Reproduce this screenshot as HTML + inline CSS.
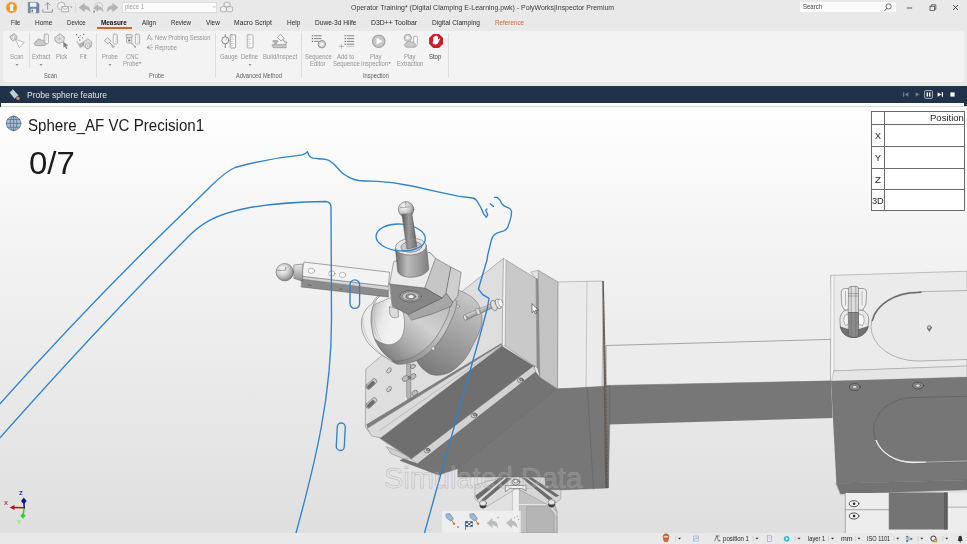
<!DOCTYPE html>
<html><head><meta charset="utf-8"><title>PolyWorks Inspector</title>
<style>
html,body{margin:0;padding:0;}
body{width:967px;height:544px;overflow:hidden;background:#e9e9e9;font-family:"Liberation Sans",sans-serif;position:relative;color:#222;}
.abs{position:absolute;white-space:nowrap;}
.t{position:absolute;white-space:nowrap;transform-origin:0 50%;filter:grayscale(1);}
.t.c{filter:none;}
.rib{position:absolute;left:3px;top:30.5px;width:961px;height:51px;background:#f3f3f3;border-radius:3px;}
.sep{position:absolute;width:1px;background:#dedede;}
.bar{position:absolute;left:0;top:86px;width:967px;height:16.7px;background:#20314a;}
.view{position:absolute;left:0;top:106px;width:967px;height:427px;overflow:hidden;background:linear-gradient(#ffffff 0%,#f3f3f3 33%,#dfdfdf 100%);}
.status{position:absolute;left:0;top:533px;width:967px;height:11px;background:#e9e9e9;}
svg{position:absolute;left:0;top:0;}
</style></head><body>
<div class="t" style="left:351.0px;top:2.74px;font-size:7px;line-height:9.1px;color:#3a3a3a;transform:scaleX(0.991);">Operator Training* (Digital Clamping E-Learning.pwk) - PolyWorks|Inspector Premium</div>
<div class="abs" style="left:122px;top:2px;width:95px;height:11px;background:#fbfbfb;border:1px solid #dcdcdc;box-sizing:border-box;"></div>
<div class="t" style="left:125.0px;top:3.13px;font-size:6.6px;line-height:8.58px;color:#a0a0a0;transform:scaleX(0.893);">piece 1</div>
<div class="abs" style="left:800px;top:2px;width:96px;height:10px;background:#fbfbfb;"></div>
<div class="t" style="left:803.0px;top:2.92px;font-size:6.4px;line-height:8.32px;color:#444;transform:scaleX(0.937);">Search</div>
<div class="t" style="left:10.8px;top:18.34px;font-size:7px;line-height:9.1px;color:#2a2a2a;transform:scaleX(0.820);">File</div>
<div class="t" style="left:34.7px;top:18.34px;font-size:7px;line-height:9.1px;color:#2a2a2a;transform:scaleX(0.932);">Home</div>
<div class="t" style="left:67.2px;top:18.34px;font-size:7px;line-height:9.1px;color:#2a2a2a;transform:scaleX(0.869);">Device</div>
<div class="t" style="left:142.3px;top:18.34px;font-size:7px;line-height:9.1px;color:#2a2a2a;transform:scaleX(0.893);">Align</div>
<div class="t" style="left:171.3px;top:18.34px;font-size:7px;line-height:9.1px;color:#2a2a2a;transform:scaleX(0.871);">Review</div>
<div class="t" style="left:205.8px;top:18.34px;font-size:7px;line-height:9.1px;color:#2a2a2a;transform:scaleX(0.917);">View</div>
<div class="t" style="left:234.1px;top:18.34px;font-size:7px;line-height:9.1px;color:#2a2a2a;transform:scaleX(0.965);">Macro Script</div>
<div class="t" style="left:286.9px;top:18.34px;font-size:7px;line-height:9.1px;color:#2a2a2a;transform:scaleX(0.931);">Help</div>
<div class="t" style="left:314.8px;top:18.34px;font-size:7px;line-height:9.1px;color:#2a2a2a;transform:scaleX(0.942);">Duwe-3d Hilfe</div>
<div class="t" style="left:370.8px;top:18.34px;font-size:7px;line-height:9.1px;color:#2a2a2a;transform:scaleX(0.982);">D3D++ Toolbar</div>
<div class="t" style="left:432.0px;top:18.34px;font-size:7px;line-height:9.1px;color:#2a2a2a;transform:scaleX(0.942);">Digital Clamping</div>
<div class="t" style="left:100.9px;top:18.34px;font-size:7px;line-height:9.1px;color:#111;font-weight:bold;transform:scaleX(0.912);">Measure</div>
<div class="t c" style="left:494.9px;top:18.34px;font-size:7px;line-height:9.1px;color:#c96a35;transform:scaleX(0.901);">Reference</div>
<div class="abs" style="left:97px;top:27.4px;width:35px;height:1.4px;background:#d2642a;"></div>
<div class="rib"></div>
<div class="sep" style="left:29px;top:33px;height:35px"></div>
<div class="sep" style="left:96px;top:33px;height:45px"></div>
<div class="sep" style="left:215px;top:33px;height:45px"></div>
<div class="sep" style="left:301px;top:33px;height:45px"></div>
<div class="sep" style="left:448px;top:33px;height:45px"></div>
<div class="t" style="left:10.2px;top:53.02px;font-size:6.4px;line-height:8.32px;color:#949494;transform:scaleX(0.930);">Scan</div>
<div class="t" style="left:31.7px;top:53.02px;font-size:6.4px;line-height:8.32px;color:#949494;transform:scaleX(0.930);">Extract</div>
<div class="t" style="left:56.4px;top:53.02px;font-size:6.4px;line-height:8.32px;color:#949494;transform:scaleX(0.930);">Pick</div>
<div class="t" style="left:80.2px;top:53.02px;font-size:6.4px;line-height:8.32px;color:#949494;transform:scaleX(0.930);">Fit</div>
<div class="t" style="left:102.1px;top:53.02px;font-size:6.4px;line-height:8.32px;color:#949494;transform:scaleX(0.930);">Probe</div>
<div class="t" style="left:125.6px;top:53.02px;font-size:6.4px;line-height:8.32px;color:#949494;transform:scaleX(0.930);">CNC</div>
<div class="t" style="left:219.6px;top:53.02px;font-size:6.4px;line-height:8.32px;color:#949494;transform:scaleX(0.930);">Gauge</div>
<div class="t" style="left:241.4px;top:53.02px;font-size:6.4px;line-height:8.32px;color:#949494;transform:scaleX(0.930);">Define</div>
<div class="t" style="left:262.5px;top:53.02px;font-size:6.4px;line-height:8.32px;color:#949494;transform:scaleX(0.930);">Build/Inspect</div>
<div class="t" style="left:304.6px;top:53.02px;font-size:6.4px;line-height:8.32px;color:#949494;transform:scaleX(0.930);">Sequence</div>
<div class="t" style="left:337.4px;top:53.02px;font-size:6.4px;line-height:8.32px;color:#949494;transform:scaleX(0.930);">Add to</div>
<div class="t" style="left:370.2px;top:53.02px;font-size:6.4px;line-height:8.32px;color:#949494;transform:scaleX(0.930);">Play</div>
<div class="t" style="left:404.2px;top:53.02px;font-size:6.4px;line-height:8.32px;color:#949494;transform:scaleX(0.930);">Play</div>
<div class="t" style="left:429.4px;top:53.02px;font-size:6.4px;line-height:8.32px;color:#3a3a3a;transform:scaleX(0.930);">Stop</div>
<div class="t" style="left:122.6px;top:59.62px;font-size:6.4px;line-height:8.32px;color:#949494;transform:scaleX(0.930);">Probe</div>
<div class="t" style="left:310.2px;top:59.62px;font-size:6.4px;line-height:8.32px;color:#949494;transform:scaleX(0.930);">Editor</div>
<div class="t" style="left:332.6px;top:59.62px;font-size:6.4px;line-height:8.32px;color:#949494;transform:scaleX(0.930);">Sequence</div>
<div class="t" style="left:360.9px;top:59.62px;font-size:6.4px;line-height:8.32px;color:#949494;transform:scaleX(0.930);">Inspection</div>
<div class="t" style="left:396.8px;top:59.62px;font-size:6.4px;line-height:8.32px;color:#949494;transform:scaleX(0.930);">Extraction</div>
<div class="t" style="left:155.0px;top:33.52px;font-size:6.4px;line-height:8.32px;color:#949494;transform:scaleX(0.907);">New Probing Session</div>
<div class="t" style="left:155.0px;top:44.32px;font-size:6.4px;line-height:8.32px;color:#949494;transform:scaleX(0.896);">Reprobe</div>
<div class="t" style="left:44.0px;top:71.52px;font-size:6.4px;line-height:8.32px;color:#5e5e5e;transform:scaleX(0.890);">Scan</div>
<div class="t" style="left:149.4px;top:71.52px;font-size:6.4px;line-height:8.32px;color:#5e5e5e;transform:scaleX(0.890);">Probe</div>
<div class="t" style="left:235.7px;top:71.52px;font-size:6.4px;line-height:8.32px;color:#5e5e5e;transform:scaleX(0.890);">Advanced Method</div>
<div class="t" style="left:362.8px;top:71.52px;font-size:6.4px;line-height:8.32px;color:#5e5e5e;transform:scaleX(0.890);">Inspection</div>
<svg width="967" height="106" viewBox="0 0 967 106">
<!-- title bar icons -->
<circle cx="11.6" cy="7.5" r="5.7" fill="#ea9524"/><circle cx="11.6" cy="7.5" r="5.2" fill="none" stroke="#f6c98a" stroke-width=".5"/>
<path d="M11.6,3.800 a2.100,2.100 0 0 1 1.200,3.800 l.7,3.500 h-3.800 l.7,-3.500 a2.100,2.100 0 0 1 1.200,-3.800z" fill="#fff"/>
<path d="M28.300,2.300 h9 l1.700,1.700 v8.800 h-10.700z" fill="#6e89ab" stroke="#54708f" stroke-width=".5"/>
<rect x="30" y="2.600" width="6.400" height="4.200" fill="#eef2f6"/><rect x="30.600" y="8.800" width="5.400" height="4" fill="#eef2f6"/><rect x="31.500" y="9.600" width="1.400" height="2.400" fill="#54708f"/>
<g fill="none" stroke="#9a9a9a" stroke-width="1"><path d="M42.800,9 v3.200 h9.600 v-3.200"/><path d="M47.600,9.600 v-6.600 M45.200,5.200 l2.400,-2.600 l2.400,2.600"/></g>
<g fill="#f2f2f2" stroke="#a6a6a6" stroke-width=".8"><circle cx="61.300" cy="6" r="3.800"/><rect x="61.800" y="6.600" width="6.800" height="5.200"/><path d="M61.800,6.800 l3.400,2.800 l3.400,-2.800" fill="none"/></g>
<path d="M70,6.600 h2.600 l-1.300,1.600z" fill="#999"/>
<rect x="75" y="2" width="1" height="11" fill="#dcdcdc"/>
<g fill="#b4b4b4">
<path d="M78.600,7.600 L84.600,2.800 L84.600,5.400 C88.400,5.400 90.200,8 90.200,12.400 C88.600,9.800 87.200,9.400 84.600,9.400 L84.600,12.200 Z"/>
<path d="M93,8.200 L98,4 L98,6.200 C101.400,6.200 103.400,8.600 103.600,12.400 C102,10.200 100.600,9.600 98,9.600 L98,11.800 Z"/>
<path d="M118.400,7.600 L112.400,2.800 L112.400,5.400 C108.600,5.400 106.800,8 106.800,12.400 C108.400,9.800 109.800,9.400 112.400,9.400 L112.400,12.200 Z"/>
</g>
<circle cx="98.600" cy="6.400" r="4" fill="none" stroke="#c0c0c0" stroke-width=".7"/>
<path d="M93.200,10.800 l1.800,1.800 M95,10.800 l-1.800,1.800" stroke="#555" stroke-width=".6"/>
<path d="M212.600,6 l1.600,1.800 l1.600,-1.800" fill="none" stroke="#b8b8b8" stroke-width=".7"/>
<g fill="#ededed" stroke="#9c9c9c" stroke-width=".7"><path d="M224,3.200 l3,-1 l3,1 v3 l-3,1 l-3,-1z"/><path d="M220.600,7.400 l3,-1 l3,1 v3.600 l-3,1 l-3,-1z"/><path d="M226.600,7.400 l3,-1 l3,1 v3.600 l-3,1 l-3,-1z"/></g>
<!-- search + window controls -->
<circle cx="888.600" cy="6.400" r="2.600" fill="none" stroke="#444" stroke-width=".8"/><path d="M886.800,8.400 l-2.400,2.600" stroke="#444" stroke-width=".9"/>
<path d="M906.800,8 h5.400" stroke="#333" stroke-width=".8"/>
<g fill="none" stroke="#333" stroke-width=".7"><rect x="930" y="6.200" width="4.400" height="4.400"/><path d="M931.400,6.200 v-1.400 h4.400 v4.400 h-1.400"/></g>
<path d="M953,5 l5,5 M958,5 l-5,5" stroke="#333" stroke-width=".9"/>
<!-- ribbon icons -->
<g stroke-linejoin="round" stroke-linecap="round">
<!-- scan -->
<rect x="10.600" y="34.600" width="6" height="5.400" rx="1.200" fill="#dcdcdc" stroke="#9a9a9a" stroke-width=".8" transform="rotate(-35 13.600 37.300)"/>
<circle cx="13.600" cy="37.300" r="1.500" fill="#f8f8f8" stroke="#aaa" stroke-width=".5"/>
<path d="M15.600,39.400 L24.200,42.400 L19.600,47.400 Z" fill="#fcfcfc" stroke="#a8a8a8" stroke-width=".8"/>
<!-- extract -->
<rect x="44.200" y="34.200" width="4.200" height="9.400" rx=".8" fill="#fafafa" stroke="#a4a4a4" stroke-width=".8"/>
<path d="M45.200,36 h1.400 M45.200,38 h1.400 M45.200,40 h1.400" stroke="#aaa" stroke-width=".5"/>
<path d="M36.600,45.600 C33.600,45.600 33.400,41.800 36.400,41.600 C36.600,38.600 40.400,38.200 41.600,40.400 C43.200,39.400 45,40.600 44.800,42.200 C46.600,42.600 46.400,45.600 44.400,45.600 Z" fill="#cacaca" stroke="#9c9c9c" stroke-width=".8"/>
<!-- pick -->
<path d="M55,37.400 L59.800,33.800 L64.400,37.200 L63.600,41.800 L59,43.400 L55.600,41.400 Z" fill="#e6e6e6" stroke="#9a9a9a" stroke-width=".8"/>
<path d="M55,37.400 L59.400,38.600 L64.400,37.200 M59.800,33.800 L59.400,38.600 L59,43.400 M59.400,38.600 L55.600,41.400 M59.400,38.600 L63.600,41.800" fill="none" stroke="#aaa" stroke-width=".5"/>
<path d="M63.200,41.800 L68.400,45.600 L66.200,45.800 L67.400,48.400 L66.200,48.900 L65,46.400 L63.600,47.800 Z" fill="#7c7c7c"/>
<!-- fit -->
<g fill="#666"><circle cx="76.600" cy="34.800" r=".7"/><circle cx="80.200" cy="35.600" r=".6"/><circle cx="83.800" cy="34.400" r=".7"/><circle cx="78.600" cy="37.400" r=".6"/><circle cx="82.400" cy="37.800" r=".6"/><circle cx="79.800" cy="40" r=".7"/></g>
<path d="M77,41.600 C78,44.400 80.400,44.400 81.400,43 L83.600,41.600 L83.600,45.200 L80.600,47.600 Z" fill="#b0b0b0" stroke="#999" stroke-width=".5"/>
<path d="M83.800,41.800 L87.600,38.800 L91.800,42 L91.400,46.400 L87.400,49 L84,46.400 Z" fill="#e2e2e2" stroke="#9a9a9a" stroke-width=".7"/>
<path d="M85.700,40.300 L89.700,43.400 M83.800,41.800 L87.800,45 L91.800,42 M87.800,45 L87.400,49" fill="none" stroke="#aaa" stroke-width=".5"/>
<circle cx="87.800" cy="46" r="2.400" fill="#f6f6f6" stroke="#9a9a9a" stroke-width=".7"/><circle cx="87.800" cy="46" r=".8" fill="#aaa"/>
<!-- probe -->
<rect x="113.200" y="34.200" width="4.200" height="9.800" rx=".8" fill="#fafafa" stroke="#a4a4a4" stroke-width=".8"/>
<path d="M115.400,36 h1.400 M115.400,38 h1.400 M115.400,40 h1.400 M115.400,42 h1.400" stroke="#aaa" stroke-width=".5"/>
<path d="M104.400,40.400 L108,37.600 L110.800,41.200 L108.400,43.600 Z" fill="#ececec" stroke="#9a9a9a" stroke-width=".8"/>
<path d="M109.800,42.600 L112.600,46" stroke="#8a8a8a" stroke-width="1"/><circle cx="113" cy="46.600" r="1" fill="#eee" stroke="#888" stroke-width=".6"/>
<!-- cnc probe -->
<rect x="135.400" y="34.200" width="4.200" height="9.800" rx=".8" fill="#fafafa" stroke="#a4a4a4" stroke-width=".8"/>
<path d="M137.600,36 h1.400 M137.600,38 h1.400 M137.600,40 h1.400 M137.600,42 h1.400" stroke="#aaa" stroke-width=".5"/>
<rect x="126.200" y="34.600" width="6" height="3" rx=".6" fill="#e4e4e4" stroke="#9a9a9a" stroke-width=".8"/>
<rect x="126.600" y="37.800" width="5.200" height="5.200" rx=".8" fill="#f2f2f2" stroke="#9a9a9a" stroke-width=".8"/>
<circle cx="129.200" cy="40.400" r="1.200" fill="#777"/>
<path d="M131.200,42.800 L134.600,46.200" stroke="#8a8a8a" stroke-width="1"/><circle cx="135" cy="46.800" r=".9" fill="#888"/>
<!-- small icons -->
<path d="M147,40 L149.200,34.600 L150.600,37.400 L152.600,39.400 M148,38 L151.400,39.800" fill="none" stroke="#a6a6a6" stroke-width=".9"/>
<path d="M146.400,47.600 L149,45.200 L150,49.800 Z" fill="#a6a6a6"/><path d="M150.400,45.600 l1.600,-1 M151,47.400 l1.800,0 M150.600,49 l1.400,1" stroke="#a6a6a6" stroke-width=".7"/>
<!-- gauge -->
<rect x="230.200" y="34.800" width="5.400" height="13.200" rx=".8" fill="#fafafa" stroke="#8e8e8e" stroke-width=".8"/>
<path d="M230.800,37 h2 M230.800,39.200 h2.800 M230.800,41.400 h2 M230.800,43.600 h2.800 M230.800,45.800 h2" stroke="#999" stroke-width=".5"/>
<path d="M225.300,34.600 V36.600 M225.300,44 V47.600" stroke="#777" stroke-width=".9"/>
<circle cx="225.300" cy="40.300" r="3.500" fill="#f8f8f8" stroke="#777" stroke-width=".9"/><path d="M225.300,40.300 L226.800,38.600" stroke="#888" stroke-width=".6"/>
<!-- define -->
<rect x="247.200" y="34.800" width="5.800" height="13.200" rx=".8" fill="#fafafa" stroke="#a0a0a0" stroke-width=".8"/>
<path d="M247.800,37 h2 M247.800,39.200 h2.800 M247.800,41.400 h2 M247.800,43.600 h2.800 M247.800,45.800 h2" stroke="#aaa" stroke-width=".5"/>
<!-- build/inspect -->
<path d="M277.600,37 L280.600,34.200 L284.200,38.400 L281.400,40.800 Z" fill="#f2f2f2" stroke="#8c8c8c" stroke-width=".8"/>
<path d="M283,39.800 L285.400,42" stroke="#8a8a8a" stroke-width="1"/><circle cx="285.800" cy="42.600" r="1" fill="#eee" stroke="#888" stroke-width=".6"/>
<path d="M273.200,40.600 h4.600 v1.400 h-1.400 v2.400 h9.800 v3.400 h-13 v-1.400 h-1 v-2 h2.400 v-2.400 h-1.400z" fill="#b4b4b4" stroke="#8e8e8e" stroke-width=".5"/>
<path d="M273,46.200 h13" stroke="#f4f4f4" stroke-width=".5" stroke-dasharray="1.200 .8"/>
<!-- sequence editor -->
<g stroke="#777" stroke-width=".9"><path d="M314.200,35.800 h7 M314.200,38.600 h7 M314.200,41.400 h4"/></g>
<g fill="#666"><rect x="311.800" y="35.300" width="1.200" height="1.100"/><rect x="311.800" y="38.100" width="1.200" height="1.100"/><rect x="311.800" y="40.900" width="1.200" height="1.100"/></g>
<circle cx="321.800" cy="44.200" r="3.700" fill="#d0d0d0" stroke="#8c8c8c" stroke-width=".9"/><path d="M320.600,42.200 L324.200,44.200 L320.600,46.200 Z" fill="#fff"/>
<!-- add to sequence -->
<g stroke="#777" stroke-width=".9"><path d="M347.200,35.800 h6.600 M347.200,38.600 h6.600 M347.200,41.400 h6.600 M347.200,44.200 h6.600"/></g><path d="M347.200,46.400 h6.600" stroke="#bbb" stroke-width=".8"/>
<g fill="#666"><rect x="344.600" y="35.300" width="1.300" height="1.100"/><rect x="344.600" y="38.100" width="1.300" height="1.100"/><rect x="344.600" y="40.900" width="1.300" height="1.100"/><rect x="344.600" y="43.700" width="1.300" height="1.100"/></g>
<path d="M339.600,46.400 h3.800 M341.500,44.500 v3.800" stroke="#aaa" stroke-width=".8"/>
<!-- play inspection -->
<circle cx="378.700" cy="41.200" r="6.200" fill="#c8c8c8" stroke="#a2a2a2" stroke-width="1.200"/><path d="M376.600,37.800 L382.600,41.200 L376.600,44.600 Z" fill="#fdfdfd"/>
<!-- play extraction -->
<rect x="413.600" y="36.400" width="3.800" height="9.200" rx=".7" fill="#fafafa" stroke="#a4a4a4" stroke-width=".8"/>
<path d="M407,47.200 C404,47.200 403.800,43.600 406.600,43.200 C407,40.600 410.600,40.400 411.800,42.400 C413.400,41.600 415.200,42.600 415,44.200 C416.800,44.600 416.600,47.200 414.600,47.200 Z" fill="#cacaca" stroke="#9c9c9c" stroke-width=".8"/>
<circle cx="407.800" cy="37.800" r="3.600" fill="#d4d4d4" stroke="#a0a0a0" stroke-width=".9"/><path d="M406.600,36 L410,37.800 L406.600,39.600 Z" fill="#fff"/>
<!-- stop -->
<path d="M433.200,33.900 h5.800 l4.100,4.100 v5.800 l-4.100,4.100 h-5.800 l-4.100,-4.100 v-5.800z" fill="#cb1f2e"/>
<path d="M433.200,41.600 v-4 a.6,.6 0 0 1 1.200,0 v-1.200 a.6,.6 0 0 1 1.200,0 v-.4 a.6,.6 0 0 1 1.200,0 v.8 a.6,.6 0 0 1 1.200,0 v3.200 l1,-1.400 a.6,.6 0 0 1 1,.6 l-2,3.800 c-.6,1 -1.400,1.400 -2.400,1.400 h-.6 c-1.400,0 -2.400,-1 -2.400,-2.400z" fill="#fff"/>
</g>
<!-- dropdown arrows -->
<g fill="#8e8e8e">
<path d="M15.5,64 h3 l-1.500,1.900z"/><path d="M39.500,64 h3 l-1.500,1.900z"/><path d="M108.500,64 h3 l-1.500,1.900z"/><path d="M138.800,62.200 h2.800 l-1.400,1.800z"/><path d="M248.500,64 h3 l-1.500,1.900z"/><path d="M388.200,62.200 h2.800 l-1.400,1.800z"/>
</g>
</svg>
<div class="bar"></div>
<div class="abs" style="left:0;top:102.7px;width:967px;height:3.6px;background:#fdfdfd;"></div>
<div class="abs" style="left:0;top:106.2px;width:967px;height:1.1px;background:#dadada;z-index:3"></div>
<div class="abs" style="left:0;top:102.7px;width:1.3px;height:4.3px;background:#20314a;z-index:4"></div>
<div class="abs" style="left:963.5px;top:102.7px;width:3.5px;height:3.6px;background:#20314a;z-index:4"></div>
<div class="t" style="left:26.8px;top:89.08px;font-size:9.4px;line-height:12.22px;color:#e4e6ea;transform:scaleX(0.909);">Probe sphere feature</div>
<svg width="967" height="106" viewBox="0 0 967 106">
<g>
<path d="M9.8,92.4 L12.8,89.6 L18.4,95.2 L14.4,98.6 Z" fill="#b9c3cf" stroke="#8fa0b2" stroke-width=".4"/>
<path d="M11.4,91 L16,97.2 M12.8,89.6 L17.4,96.2 M10.6,92 L15,98" stroke="#e4e9ee" stroke-width=".5" fill="none"/>
<circle cx="18" cy="98.4" r="1.7" fill="#d8874a"/>
<g fill="#6f7c8e"><path d="M903,92.200 h1.200 v4.600 h-1.200z M908.400,92.200 v4.600 l-3.800,-2.300z"/><path d="M915.600,92.200 l4,2.300 l-4,2.300z"/></g>
<rect x="924.600" y="90.600" width="7.800" height="7.800" rx="1" fill="none" stroke="#dfe3e8" stroke-width=".7"/>
<g fill="#fff"><rect x="926.600" y="92.400" width="1.400" height="4.200"/><rect x="929" y="92.400" width="1.400" height="4.200"/>
<path d="M937.600,92.200 l3.800,2.300 l-3.800,2.300z M941.800,92.200 h1.200 v4.600 h-1.200z"/>
<rect x="950.400" y="92.400" width="4.200" height="4.200"/></g>
</g>
</svg>
<div class="view">
<svg width="967" height="427" viewBox="0 106 967 427">
<defs>
<linearGradient id="gsph" x1="0" y1="0" x2="1" y2="1"><stop offset="0" stop-color="#f4f4f4"/><stop offset="1" stop-color="#9a9a9a"/></linearGradient>
<linearGradient id="gcyl" x1="0" y1="0" x2="1" y2="0"><stop offset="0" stop-color="#b8b8b8"/><stop offset=".35" stop-color="#e6e6e6"/><stop offset="1" stop-color="#8c8c8c"/></linearGradient>
<linearGradient id="gbig" x1="0" y1="0" x2="1" y2="1"><stop offset="0" stop-color="#a8a8a8"/><stop offset=".4" stop-color="#d8d8d8"/><stop offset="1" stop-color="#9c9c9c"/></linearGradient>
<linearGradient id="gbody" gradientUnits="userSpaceOnUse" x1="392" y1="362" x2="440" y2="305"><stop offset="0" stop-color="#7e7e7e"/><stop offset=".3" stop-color="#aaaaaa"/><stop offset=".65" stop-color="#d0d0d0"/><stop offset="1" stop-color="#c0c0c0"/></linearGradient>
<linearGradient id="gbody2" gradientUnits="userSpaceOnUse" x1="398" y1="365" x2="450" y2="305"><stop offset="0" stop-color="#7e7e7e"/><stop offset=".35" stop-color="#a4a4a4"/><stop offset=".7" stop-color="#c8c8c8"/><stop offset="1" stop-color="#bcbcbc"/></linearGradient>
<linearGradient id="gback" gradientUnits="userSpaceOnUse" x1="430" y1="376" x2="476" y2="300"><stop offset="0" stop-color="#787878"/><stop offset=".35" stop-color="#939393"/><stop offset=".7" stop-color="#aeaeae"/><stop offset="1" stop-color="#c6c6c6"/></linearGradient>
<linearGradient id="gbore" gradientUnits="userSpaceOnUse" x1="371" y1="320" x2="392" y2="326"><stop offset="0" stop-color="#c9c9c9"/><stop offset=".5" stop-color="#e9e9e9"/><stop offset="1" stop-color="#f1f1f1"/></linearGradient>
<linearGradient id="gscrew" gradientUnits="userSpaceOnUse" x1="478" y1="308" x2="481" y2="315"><stop offset="0" stop-color="#eee"/><stop offset="1" stop-color="#777"/></linearGradient>
</defs>
<g stroke-linejoin="round" stroke-linecap="round">
<!-- ===== beam ===== -->
<polygon points="606.5,345.5 831,339.4 831,381 606.5,385.5" fill="#ececec" stroke="#868686" stroke-width=".7"/>
<polygon points="606.5,385.5 831,380.8 832.6,417.9 608,424.5" fill="#777"/>
<!-- ===== right block ===== -->
<polygon points="831.2,275.4 967,271.2 967,366 834,371" fill="#ebebeb" stroke="#8a8a8a" stroke-width=".5"/>
<polygon points="831.2,275.4 834,275.3 834,381 831,381.6" fill="#f6f6f6" stroke="#999" stroke-width=".4"/>
<polygon points="834,371 967,366 967,377 832,381.3" fill="#e6e6e6" stroke="#8a8a8a" stroke-width=".4"/>
<polygon points="831,381 967,377 967,479.9 836.4,483.5" fill="#777"/>
<polygon points="836.4,483.5 967,479.9 967,489.8 840.6,494.1" fill="#737373" stroke="#666" stroke-width=".4"/>
<!-- slot top -->
<path d="M967,290.5 L918,291.8 A47,34.6 0 0 0 918,361 L967,359.5" fill="#e9e9e9" stroke="#8a8a8a" stroke-width=".6"/>
<path d="M921,292.3 L918,292.4 A46.4,34 0 0 0 872.4,320.4" fill="none" stroke="#6a6a6a" stroke-width="1.5"/>
<!-- slot bottom -->
<path d="M967,396.3 L913,397.5 A39.4,32.85 0 0 0 913,463.2 L967,461.6" fill="#767676" stroke="#5a5a5a" stroke-width=".6"/>
<path d="M875.2,440 A39.4,32.85 0 0 0 913,463.2 L926,462.8 L926,461.6 L913,461.4 A36.5,29.5 0 0 1 876.8,440 Z" fill="#ededed"/>
<path d="M926,462.2 L967,461" stroke="#cfcfcf" stroke-width=".7" fill="none"/>
<!-- bolts -->
<g fill="#8a8a8a" stroke="#333" stroke-width=".6"><ellipse cx="854.8" cy="387" rx="5.5" ry="3.4"/><ellipse cx="918" cy="385.6" rx="5.5" ry="3.4"/></g>
<g fill="#ddd" stroke="#444" stroke-width=".5"><ellipse cx="854.8" cy="387" rx="2.4" ry="1.6"/><ellipse cx="918" cy="385.6" rx="2.4" ry="1.6"/></g>
<!-- pin -->
<circle cx="929.3" cy="327.6" r="2" fill="#ccc" stroke="#444" stroke-width=".6"/><path d="M927.6,328.6 L929.3,331.5 L931,328.6" fill="#777" stroke="#444" stroke-width=".4"/>
<!-- lower right boxes -->
<rect x="845.3" y="493" width="122" height="40.5" fill="#ededed"/>
<path d="M845.3,494 V533 M845.3,509.7 H889 M948,507.1 H967" stroke="#8e8e8e" stroke-width=".7" fill="none"/>
<rect x="888.8" y="492.5" width="58.8" height="37" fill="#747474"/>
<rect x="944" y="492.5" width="3.6" height="37" fill="#5e5e5e"/>
<g fill="#f6f6f6" stroke="#2e2e2e" stroke-width=".8"><ellipse cx="854.1" cy="503.7" rx="4.8" ry="3"/><ellipse cx="854.1" cy="516" rx="4.8" ry="3"/></g>
<circle cx="854.1" cy="503.7" r="1.3" fill="#222"/><circle cx="854.1" cy="516" r="1.3" fill="#222"/>
<!-- ===== central block ===== -->
<polygon points="558,282 603.3,281 602,388 557.5,388.8" fill="#ebebeb" stroke="#8a8a8a" stroke-width=".5"/>
<path d="M587,281.7 L586,388" stroke="#9a9a9a" stroke-width=".5"/>
<!-- plate 2 -->
<polygon points="538.3,270.3 558,282 557.5,388.8 540,377.8" fill="#c3c3c3" stroke="#777" stroke-width=".5"/>
<polygon points="531,272 538.3,270.3 538.3,279 536,278.5" fill="#e2e2e2" stroke="#777" stroke-width=".4"/>
<!-- box right face -->
<polygon points="506,260 536,278.5 537,367.5 505,346" fill="#c9c9c9" stroke="#777" stroke-width=".5"/>
<polygon points="536,278.5 538.3,279 540,377.8 537,367.5" fill="#8a8a8a"/>
<!-- box big face -->
<polygon points="503.6,258.6 502.5,345.8 381,438 369,431.6 365.3,427 365.8,369.2 379.3,357.6" fill="#dedede" stroke="#777" stroke-width=".5"/>
<polygon points="503.6,258.6 506,260 505,346 502.5,345.8" fill="#f2f2f2" stroke="#888" stroke-width=".4"/>
<!-- dark band 1 -->
<polygon points="380.5,438.5 501.6,346 535,367 411.6,458.8" fill="#6f6f6f" stroke="#555" stroke-width=".4"/>
<!-- light strip -->
<polygon points="411.6,458.8 533.8,365.7 535.8,372 417.6,463.8" fill="#d2d2d2" stroke="#666" stroke-width=".4"/>
<!-- dark 2 -->
<polygon points="417.6,463.8 535.8,372 540,377.8 557,388.9 458,468.6 438.6,475 400,460.5 403.5,458.8" fill="#747474" stroke="#555" stroke-width=".4"/>
<!-- big dark -->
<polygon points="458,468.6 557,388.9 609.7,386 609.7,423.6 608.4,488 545,490.6 544,477 458,477" fill="#777" stroke="#5a5a5a" stroke-width=".4"/>
<path d="M587.3,388 L593.5,489" stroke="#5c5c5c" stroke-width=".5"/>
<!-- dark vertical strip -->
<polygon points="602.3,281 603.8,281 608.6,488 605.2,488" fill="#5c5c5c"/>
<path d="M603.4,300 L608,487" stroke="#b0764a" stroke-width=".6" stroke-dasharray="1.500 2.500" fill="none"/>

<!-- ===== column below ===== -->
<g stroke-linejoin="round">
<polygon points="519.4,486 548,486 557.2,512 557.2,533 519.4,533" fill="#c2c2c2" stroke="#777" stroke-width=".5"/>
<polygon points="512.8,489 519.4,489 519.4,533 512.8,533" fill="#efefef" stroke="#999" stroke-width=".4"/>
<path d="M519.4,504.6 L548.500,504.600 L557.200,515" fill="none" stroke="#f2f2f2" stroke-width=".8"/>
<polygon points="527,506.2 548,506.2 554,513.5 554,533 527,533" fill="#b5b5b5" stroke="#8a8a8a" stroke-width=".4"/>
<!-- left bracket -->
<polygon points="475.2,485 500.8,477.4 514,477.4 514,490 486,507 475.2,499.5" fill="#dcdcdc" stroke="#777" stroke-width=".4"/>
<polygon points="499.6,477.4 504.4,477.4 477.5,499.9 475.2,495.7" fill="#6c6c6c"/>
<polygon points="506.8,477.4 511.5,478.500 485.3,500.500 480.5,500.5" fill="#6c6c6c"/>
<!-- right bracket -->
<polygon points="520,477.4 545,477.4 545,489.7 560.8,489.7 560.8,499 551,506.500 520,490" fill="#d6d6d6" stroke="#777" stroke-width=".4"/>
<polygon points="521.2,477.4 525.3,477.4 552.8,498.7 548.6,499.9" fill="#6c6c6c"/>
<polygon points="527.1,477.4 531.9,477.4 559.4,495.7 555.8,496.9" fill="#6c6c6c"/>
<g stroke="#444" stroke-width=".5">
<ellipse cx="483" cy="505.6" rx="3.2" ry="2.6" fill="#3c3c3c"/><ellipse cx="483" cy="503.2" rx="3.5" ry="2.6" fill="#e6e6e6"/>
<ellipse cx="551.6" cy="504.6" rx="3.2" ry="2.6" fill="#3c3c3c"/><ellipse cx="551.6" cy="502.2" rx="3.5" ry="2.6" fill="#e6e6e6"/>
<ellipse cx="515.8" cy="482" rx="4" ry="3" fill="#d8d8d8"/><ellipse cx="515.8" cy="481.200" rx="2.4" ry="1.600" fill="#f4f4f4"/>
<polygon points="505.6,485.5 526,485.5 526,491 522,488.600 509.500,488.600 505.6,491.500" fill="#f2f2f2"/>
</g>
</g>
<!-- ===== large cylinder ===== -->
<g stroke-linejoin="round" stroke-linecap="round">
<!-- E back flange -->
<path d="M417.5,362.2 C420,366 422,368.5 424.8,370.4 C428,373.5 431,374.6 434,375 C438,375.6 441.5,375.2 445,374.1 C448.5,373 451.5,371.5 454.2,369.5 C458.5,366.3 462,362.6 465.2,358.5 C468.2,354.5 470.6,350 472.6,345.6 C475,341 477.3,337 479,332.8 C480.6,329 481.4,325.3 481.8,321.7 C482.2,317.8 481.8,314 480.9,310.7 C480,307 478.4,304.2 476.3,301.5 C474,298.5 470.8,296 467.1,294.2 C464.7,292.6 462.2,291.4 459.7,290.5 L430,290 L405,330 Z" fill="url(#gback)" stroke="#5e5e5e" stroke-width=".5"/>
<!-- D chamfer band -->
<path d="M392,361.5 L396.3,364 C400.3,364.5 404.3,364.2 408.3,363.1 C411.5,362.5 414.5,361.6 417.5,360.3 C421.5,358.3 425,355.8 428.5,353 C431,350.8 433.5,348.3 435.8,345.6 C438.5,342.5 441,339 443.2,335.5 C446,331 448.5,326.5 450.5,321.7 C452.3,318 453.8,314.4 455.1,310.7 C456,307.6 456.6,304.6 457,301.5 L440,285 L400,320 Z" fill="url(#gbody2)" stroke="#5e5e5e" stroke-width=".5"/>
<!-- C side wall -->
<path d="M372,318 L374.3,338.3 L379.8,348.4 L386.2,355.7 L394.5,361.2 C398,361.5 401.3,361 404.6,360 C408.5,359 412,357.6 415.6,355.7 C419,353.8 422,351.7 424.8,349.3 C427.4,347 430,344.6 432.2,342 C435,338.8 437.4,335.4 439.5,331.8 C441.6,328.5 443.5,325.2 445,321.7 C446.5,318.7 447.7,315.7 448.7,312.6 C449.6,309.6 450.1,306.5 450.5,303.4 L430,280 L380,320 Z" fill="url(#gbody)" stroke="#5e5e5e" stroke-width=".5"/>
<!-- B bore interior -->
<path d="M373.4,305.2 C371.8,309 371.2,312.6 371.2,316.2 C370.9,319.4 371,322.4 371.5,325.4 C371.9,329.8 372.8,334 374.3,338.3 C378,341.5 382.5,343.8 387.2,344.7 C389.8,344.8 392.2,344.4 394.5,343.4 C397,342.2 399.2,340.5 400.9,338.3 C402.4,336 403.3,333.6 403.7,330.9 C404.4,327.9 404.7,324.8 404.6,321.7 C404.5,318.6 404,315.6 403.1,312.6 L398,295 Z" fill="url(#gbore)" stroke="#666" stroke-width=".5"/>
<path d="M374.6,300 C370,312 372,330 378.5,339.5" fill="none" stroke="#999" stroke-width=".4"/>
<path d="M376.6,299 C372.4,312 374,328 381,340.6" fill="none" stroke="#aaa" stroke-width=".4"/>
<!-- A crescent -->
<path d="M378,296 C375,298 374,300.5 372.5,303.4 C368.5,306 365.8,309 364.2,312.6 C362.2,316 361.3,319.8 361.4,323.6 C361.3,328 362.3,332.3 364.2,336.4 C366.3,341 369.4,345 373.4,348.4 C376.2,351.2 379.2,353.6 382.6,355.7 C386.3,358 390.2,360 394.5,361.2 C391.5,359.8 388.7,358 386.2,355.7 C383.8,353.6 381.6,351.2 379.8,348.4 C377.5,345.3 375.6,342 374.3,338.3 C372.8,334 371.9,329.8 371.5,325.4 C371,322.4 370.9,319.4 371.2,316.2 C371.2,312.6 371.8,309 373.4,305.2 C374.6,301.5 376.8,298.4 380,296 Z" fill="#ededed" stroke="#5e5e5e" stroke-width=".5"/>
<path d="M363,318 C362,332 368,346 392,361.8" fill="none" stroke="#8a8a8a" stroke-width=".4"/>
<!-- small pins on cylinder -->
<circle cx="433.3" cy="348.5" r="1.7" fill="#e8e8e8" stroke="#555" stroke-width=".4"/>
<circle cx="458" cy="306.5" r="1.5" fill="#e0e0e0" stroke="#555" stroke-width=".4"/>
<!-- screw on right -->
<polygon points="464.5,315 492,303.5 493.5,307.5 466,320" fill="url(#gscrew)" stroke="#555" stroke-width=".4"/>
<ellipse cx="465.2" cy="317.5" rx="1.6" ry="2.7" fill="#e0e0e0" stroke="#555" stroke-width=".4" transform="rotate(-20 465.2 317.5)"/>
<ellipse cx="478" cy="311.5" rx="2" ry="3.6" fill="#d8d8d8" stroke="#555" stroke-width=".4" transform="rotate(-20 478 311.5)"/>
<ellipse cx="494" cy="305.5" rx="3" ry="5.4" fill="#dcdcdc" stroke="#444" stroke-width=".5" transform="rotate(-20 494 305.5)"/>
<ellipse cx="498.5" cy="303.8" rx="2.8" ry="5" fill="#eee" stroke="#444" stroke-width=".5" transform="rotate(-20 498.5 303.8)"/>
<ellipse cx="500.5" cy="303" rx="2.2" ry="4" fill="#f4f4f4" stroke="#555" stroke-width=".4" transform="rotate(-20 500.5 303)"/>
</g>
<!-- ===== plate details ===== -->
<g stroke="#555" stroke-width=".5" stroke-linecap="round">
<rect x="407" y="364" width="3.8" height="35" fill="#b4b4b4" stroke="#666" stroke-width=".5"/>
<g transform="rotate(-43 371.3 384)"><rect x="364.8" y="381.4" width="13" height="5.2" rx="2.6" fill="#c9c9c9"/><rect x="365.600" y="382.600" width="9.500" height="3.600" rx="1.800" fill="#6c6c6c" stroke="none"/></g>
<g transform="rotate(-43 371.3 403)"><rect x="364.8" y="400.4" width="13" height="5.2" rx="2.6" fill="#c9c9c9"/><rect x="365.600" y="401.600" width="9.500" height="3.600" rx="1.800" fill="#6c6c6c" stroke="none"/></g>
<ellipse cx="389" cy="370.4" rx="1.9" ry="3" fill="#cfcfcf" transform="rotate(35 389 370.4)"/>
<ellipse cx="389" cy="389.1" rx="1.9" ry="3" fill="#cfcfcf" transform="rotate(35 389 389.1)"/>
<g fill="#bdbdbd"><ellipse cx="405.500" cy="378.500" rx="3.6" ry="2.6" transform="rotate(-30 405.500 378.500)"/><ellipse cx="413" cy="376.500" rx="3.4" ry="2.4" transform="rotate(-40 413 376.500)"/>
<ellipse cx="413" cy="366.500" rx="2.6" ry="2" transform="rotate(-30 413 366.500)"/><ellipse cx="414.700" cy="393" rx="3.2" ry="2.4" transform="rotate(-40 414.700 393)"/></g>
<circle cx="409.400" cy="377.600" r="1.500" fill="#8a8a8a"/>
<circle cx="405.7" cy="398.5" r="1.1" fill="#fff" stroke="none"/><circle cx="411.800" cy="399.500" r="1" fill="#fff" stroke="none"/>
</g>
<!-- plate bottom groove + chamfer -->
<polygon points="366.2,424.5 501.6,343 501.6,344.6 367.6,428.2" fill="#7e7e7e" stroke="none"/>
<polygon points="367.6,428.2 501.6,344.6 501.6,346.2 380.7,437.8 372,436" fill="#dadada" stroke="#666" stroke-width=".4"/>
<path d="M379.5,430.500 L501.600,345.600" stroke="#8a8a8a" stroke-width=".4" fill="none"/>
<!-- bolts on light strip -->
<g stroke="#444" stroke-width=".5" fill="#cfcfcf">
<ellipse cx="427" cy="450.6" rx="3" ry="2.4"/><ellipse cx="474" cy="415.4" rx="3" ry="2.4"/><ellipse cx="520.4" cy="380.4" rx="3" ry="2.4"/>
<ellipse cx="428" cy="449.8" rx="1.8" ry="1.4" fill="#9a9a9a"/><ellipse cx="475" cy="414.6" rx="1.8" ry="1.4" fill="#9a9a9a"/><ellipse cx="521.4" cy="379.6" rx="1.8" ry="1.4" fill="#9a9a9a"/>
</g>
<!-- small bracket lower-left -->
<polygon points="386.6,447 391,453.7 403.5,458.8 411.6,458.8 400,452" fill="#cfcfcf" stroke="#666" stroke-width=".4"/>
<!-- ===== probe assembly ===== -->
<defs>
<radialGradient id="gball" cx=".38" cy=".35" r=".75"><stop offset="0" stop-color="#fbfbfb"/><stop offset=".45" stop-color="#d0d0d0"/><stop offset="1" stop-color="#747474"/></radialGradient>
<linearGradient id="gstem" x1="0" y1="0" x2="1" y2="0"><stop offset="0" stop-color="#5c5c5c"/><stop offset=".5" stop-color="#9c9c9c"/><stop offset="1" stop-color="#6c6c6c"/></linearGradient>
<linearGradient id="gscyl" x1="0" y1="0" x2="1" y2="0"><stop offset="0" stop-color="#6a6a6a"/><stop offset=".35" stop-color="#bcbcbc"/><stop offset=".65" stop-color="#a2a2a2"/><stop offset="1" stop-color="#7e7e7e"/></linearGradient>
<linearGradient id="gneck" x1="0" y1="0" x2="0" y2="1"><stop offset="0" stop-color="#ececec"/><stop offset="1" stop-color="#8c8c8c"/></linearGradient>
</defs>
<g stroke-linejoin="round" stroke-linecap="round" stroke="#555" stroke-width=".5">
<!-- rod -->
<polygon points="301.6,278 388.3,289.500 388.3,297 301.6,287" fill="#8b8b8b"/>
<polygon points="301.6,276.2 388.3,286.3 388.3,290.3 301.6,278.9" fill="#d6d6d6" stroke-width=".3"/>
<polygon points="304.3,262.1 389.6,272.2 388.3,286.3 301.6,276.2" fill="#f3f3f3"/>
<polygon points="294.2,265 302.6,264 302.6,281 294.2,278.6" fill="url(#gneck)"/>
<circle cx="284.8" cy="272.2" r="8.7" fill="url(#gball)"/>
<path d="M278,270.500 L285.600,270.200 L285.800,267.500" stroke="#666" stroke-width=".6" fill="none"/>
<g fill="#fcfcfc" stroke="#777"><ellipse cx="311.4" cy="270.8" rx="3.2" ry="2.6"/><ellipse cx="331.8" cy="273.5" rx="3.2" ry="2.6"/><ellipse cx="342.6" cy="274.9" rx="3.2" ry="2.6"/></g>
<g fill="#777" stroke="#aaa" stroke-width=".4"><ellipse cx="309.7" cy="285.2" rx="2.8" ry="1.6" transform="rotate(8 309.7 285.2)"/><ellipse cx="341.2" cy="289.2" rx="2.8" ry="1.6" transform="rotate(8 341.2 289.2)"/></g>
<!-- block bottom faces -->
<polygon points="408.1,314.5 442.1,298 446.2,293 452.8,302 451.2,306.2 433,313.7 412,320" fill="#a6a6a6"/>
<!-- block right faces -->
<polygon points="429.7,252.400 435.5,258.2 451.2,267.3 446.2,293 442.1,298 424.7,288" fill="#c6c6c6"/>
<polygon points="451.2,267.3 461.1,272.3 457.8,296.3 452.8,302 446.2,293" fill="#cfcfcf"/>
<!-- block front face -->
<polygon points="389.9,283.9 424.7,288 442.1,298 408.1,314.5 392.4,306.2" fill="#868686"/>
<!-- block top face -->
<polygon points="394.1,261.5 429.7,252.4 435.5,258.2 424.7,288 389.9,283.9" fill="#eaeaea"/>
<!-- hole -->
<ellipse cx="410.6" cy="296.3" rx="10.8" ry="5.8" fill="#9a9a9a" stroke="#444"/>
<ellipse cx="410.6" cy="296.3" rx="8.4" ry="4.4" fill="#c4c4c4" stroke="#555"/>
<ellipse cx="410.8" cy="296.6" rx="5" ry="2.8" fill="#8e8e8e" stroke="#555"/>
<ellipse cx="411" cy="296.6" rx="2.6" ry="1.5" fill="#f4f4f4" stroke="none"/>
<!-- small foot under block -->
<path d="M389.5,307 L389.8,314 C391,318 396,319 398.5,316.5 L398,309.5 Z" fill="#dcdcdc"/>
<!-- small cylinder -->
<path d="M395.4,248.5 L397.7,271.5 C401,280 424,279 428.8,269 L426.4,246.4 Z" fill="url(#gscyl)"/>
<ellipse cx="410.9" cy="246.6" rx="15.5" ry="8.4" fill="#e6e6e6" transform="rotate(-4 410.9 246.6)"/>
<ellipse cx="411.4" cy="246.8" rx="10.5" ry="5.4" fill="#c9c9c9" transform="rotate(-4 411.4 246.8)"/>
<!-- stem -->
<polygon points="402.2,214 411.6,213 416.9,246.8 407.3,249" fill="url(#gstem)"/>
<circle cx="406.1" cy="209.4" r="7.8" fill="url(#gball)"/>
<path d="M400.5,207.5 L409,207" stroke="#777" stroke-width=".6" fill="none"/><path d="M405.6,202 L405.9,207.2" stroke="#888" stroke-width=".5" fill="none"/>
</g>
<!-- ===== clamp on right block ===== -->
<g stroke="#4a4a4a" stroke-width=".5" stroke-linejoin="round">
<path d="M840,322 C839,314 844,310 848.6,308.8 L858.5,308.8 C864,310 870,314 868.6,322 L868,328 C866,334 860,337.5 854,337.5 C847,337.5 842,334 840.5,328 Z" fill="#e8e8e8"/>
<path d="M844.500,316 C843.500,319 843.500,323 845.500,325.500 L848.600,324 L848.600,314 Z M863.500,316 C864.500,319 864.500,323 862.500,325.500 L858.500,324 L858.500,314 Z" fill="#f8f8f8" stroke-width=".4"/>
<path d="M840.5,327 L848.600,329.5 L858.5,329.5 L868.300,326.5 C866,334 860,337.5 854,337.5 C847,337.5 842,334 840.5,327 Z" fill="#727272"/>
<path d="M841.2,293 C841.2,289.5 843,288.5 846,288.5 L862,288.5 C865.5,288.5 866.5,290 866.5,293 L866,304 C865,307 863,308.8 862.8,310 L844.3,310 C844,308 842,307 841.6,304 Z" fill="#efefef"/>
<path d="M845.500,291.500 L845.500,305 M862,291.500 L862,305" fill="none" stroke="#777" stroke-width=".5"/>
<path d="M848.6,288 C848.600,285.600 858.500,285.600 858.5,288 L858.5,312.5 L848.6,312.5 Z" fill="#dcdcdc"/>
<path d="M848.6,312.5 L858.5,312.5 L858.5,335 L856.500,337.300 L850.600,337.300 L848.6,335 Z" fill="#8a8a8a"/>
<path d="M851.200,286.500 L851.200,337 M855.800,286.500 L855.800,337 M848.600,293.500 H858.500 M848.600,296 H858.500" fill="none" stroke="#666" stroke-width=".45"/>
</g>
<!-- ===== blue scan curves ===== -->
<g fill="none" stroke="#2f82cb" stroke-width="1.35" stroke-linecap="round" stroke-linejoin="round">
<path d="M-2,406 Q72,323 150,245.5 L208,189 C216,181 224,172.5 235,167.5 C258,161 282,157 302.3,154.9 L305.6,153.4 L307.3,151.6 L308.3,153.6 C308.7,155.6 310.5,157.5 313.1,158.2 C316.5,158.8 319.5,158.6 323,159 C325,159.3 327,159.6 328.8,160.3 C330.8,161.3 332.4,162.6 333.8,164 L342,172.7 C344.5,174.8 347.3,176.4 350.3,177.8 C353,179.2 355.8,180 358.7,180.5 C365,181.1 371,181.1 377.3,181.3 L392.2,182.6 L412,186 L436.9,191.6 L458,196.2 L472.9,198 C474.500,198.500 475.800,199.400 476.700,200.600 L480.600,207 L483.800,214.100 L486.400,217.300 L487.700,214.700 L485.700,210.200 L487,209"/>
<path d="M490.200,203.800 L493.500,206.400"/>
<path d="M494.500,197.400 L497.300,197.400 L499.900,200 L501.800,203.800 C502.800,205 503.800,205.900 505,206.400 L509.500,208.300 C510.600,209.200 511.300,210.300 511.500,211.500 C511.600,214.500 511,217.300 510.200,219.900 L507.600,227.600 C506.600,229.200 505.400,230.200 503.800,230.800 L497.300,232.800 C495.300,233.700 493.800,235 492.800,236.600 C492,238.300 491.300,240 490.900,241.800 L489,250 C488,253.500 487.300,257 487,260 L478.400,289 L482.700,294.700 L489,298.400 L487.600,307 C478,345 450,440 424.500,533"/>
<path d="M-2,440 Q100,325 185,240 C200,224 215,214 250,207.5 C270,204 290,202 326,201.5 C330,202 331,204 331,207 L331.500,320 C331.500,395 316,460 296,533"/>
<ellipse cx="400.700" cy="237.500" rx="24.700" ry="13.400" transform="rotate(4 400.700 237.500)"/>
<rect x="350" y="279.800" width="9.600" height="28.600" rx="4.800"/>
<rect x="336.800" y="423" width="8" height="27.500" rx="4" transform="rotate(3 340.800 436.500)"/>
</g>
<polygon points="402.2,214 411.6,213 415.5,238 405.8,239" fill="url(#gstem)"/><path d="M402.2,214 L405.8,239 M411.6,213 L415.5,238" stroke="#555" stroke-width=".4" fill="none"/>
<!-- ===== watermark ===== -->
<text x="384" y="487.600" font-family="Liberation Sans, sans-serif" font-size="29" textLength="198" lengthAdjust="spacingAndGlyphs" fill="rgba(255,255,255,0.12)" stroke="rgba(165,165,165,0.55)" stroke-width=".75">Simulated Data</text>
<!-- ===== toolbar overlay ===== -->
<rect x="442" y="510.800" width="78.700" height="22" fill="rgba(240,240,240,0.86)"/>
<g>
<path d="M446,514 L450,513.500 L453.500,519 L450.500,521 L446.500,518 Z" fill="#9fb7d0" stroke="#5b7ea6" stroke-width=".5"/><path d="M451.500,520 L453.500,523" stroke="#777" stroke-width=".8"/><circle cx="454" cy="523.800" r="1.300" fill="#d9813b"/><circle cx="458" cy="527" r=".8" fill="#34507a"/>
<path d="M470,514 L474,513.500 L477.500,519 L474.500,521 L470.500,518 Z" fill="#9fb7d0" stroke="#5b7ea6" stroke-width=".5"/><path d="M475.500,520 L477.500,523" stroke="#777" stroke-width=".8"/><circle cx="478" cy="523.800" r="1.300" fill="#d9813b"/>
<path d="M465.500,521.500 V529.500" stroke="#34507a" stroke-width=".7"/><rect x="466" y="521.600" width="6.500" height="5" fill="#fff" stroke="#34507a" stroke-width=".5"/><path d="M466,521.600h2.200v1.700h-2.200z M470.300,521.600h2.200v1.700h-2.200z M468.200,523.300h2.100v1.600h-2.100z M466,524.900h2.200v1.700h-2.200z M470.300,524.900h2.200v1.700h-2.200z" fill="#34507a"/>
<path d="M486.600,523 L492.500,518 L492.500,520.800 C496,520.800 498,523.500 498.200,528.500 C496.500,526 495,525.200 492.500,525.200 L492.500,528 Z" fill="#bdbdbd"/>
<path d="M506,523 L511.900,518 L511.900,520.800 C515.400,520.800 517.400,523.500 517.600,528.500 C515.900,526 514.400,525.200 511.900,525.200 L511.900,528 Z" fill="#bdbdbd"/>
<circle cx="498" cy="517.500" r=".8" fill="#aaa"/><circle cx="514.500" cy="517.800" r=".7" fill="#aaa"/><circle cx="517.200" cy="516.200" r=".7" fill="#aaa"/><circle cx="518.500" cy="519.500" r=".7" fill="#aaa"/>
</g>
<!-- ===== axes ===== -->
<g stroke-linecap="round">
<path d="M24.300,507.800 L13,507.600" stroke="#b51212" stroke-width="1.500"/><path d="M9.600,507.400 L14.500,505 L14.500,510 Z" fill="#b51212"/>
<path d="M24.200,508 L23.300,514" stroke="#22d822" stroke-width="1.500"/><path d="M23,513 L25.600,515.800 L23,518.800 L20.400,515.800 Z" fill="#22d822"/>
<path d="M24.300,507.800 L23.900,503" stroke="#15158f" stroke-width="1.500"/><path d="M23.800,497.600 L26.600,501 L23.800,504.400 L21,501 Z" fill="#15158f"/>
</g>
<text x="19" y="494.600" font-family="Liberation Sans, sans-serif" font-size="6" font-weight="bold" fill="#2626a6">Z</text>
<text x="4" y="504.600" font-family="Liberation Sans, sans-serif" font-size="6" font-weight="bold" fill="#c43a3a">X</text>
<text x="17" y="523.500" font-family="Liberation Sans, sans-serif" font-size="6" font-weight="bold" fill="#6fe86f">Y</text>
<!-- ===== globe icon ===== -->
<g fill="none" stroke="#4f6b86" stroke-width=".7">
<circle cx="13.600" cy="123.400" r="7.300" fill="#a9bccd"/>
<ellipse cx="13.600" cy="123.400" rx="3.300" ry="7.300"/><path d="M13.600,116.100 V130.700 M6.300,123.400 H20.900 M7.500,119.500 H19.700 M7.500,127.300 H19.700"/>
</g>
<!-- mouse cursor -->
<path d="M532,304 L532,312.600 L534,310.800 L535.400,313.800 L536.600,313.200 L535.200,310.300 L537.800,310 Z" fill="#fff" stroke="#333" stroke-width=".6" stroke-linejoin="round"/>
</svg>
</div>
<div class="t" style="left:27.8px;top:116.31px;font-size:16px;line-height:20.8px;color:#1c1c1c;transform:scaleX(0.943);">Sphere_AF VC Precision1</div>
<div class="t" style="left:28.5px;top:143.70px;font-size:30.6px;line-height:39.78px;color:#1c1c1c;transform:scaleX(1.079);">0/7</div>
<div class="abs" style="left:871px;top:111px;width:94px;height:100px;background:#fff;border:1px solid #6a6a6a;box-sizing:border-box;"></div>
<div class="abs" style="left:884px;top:111px;width:1px;height:100px;background:#6a6a6a;"></div>
<div class="abs" style="left:871px;top:124px;width:94px;height:1px;background:#6a6a6a;"></div>
<div class="abs" style="left:871px;top:146px;width:94px;height:1px;background:#6a6a6a;"></div>
<div class="abs" style="left:871px;top:167.5px;width:94px;height:1px;background:#6a6a6a;"></div>
<div class="abs" style="left:871px;top:189px;width:94px;height:1px;background:#6a6a6a;"></div>
<div class="t" style="left:930.0px;top:112.48px;font-size:9.4px;line-height:12.22px;color:#222;transform:scaleX(1.017);">Position</div>
<div class="t" style="left:875.0px;top:130.08px;font-size:9.4px;line-height:12.22px;color:#222;transform:scaleX(0.957);">X</div>
<div class="t" style="left:875.0px;top:151.88px;font-size:9.4px;line-height:12.22px;color:#222;transform:scaleX(0.957);">Y</div>
<div class="t" style="left:875.0px;top:173.58px;font-size:9.4px;line-height:12.22px;color:#222;transform:scaleX(1.045);">Z</div>
<div class="t" style="left:872.2px;top:195.38px;font-size:9.4px;line-height:12.22px;color:#222;transform:scaleX(0.982);">3D</div>
<div class="status"></div>
<div class="t" style="left:723.0px;top:535.33px;font-size:6.5px;line-height:8.45px;color:#1c1c1c;transform:scaleX(0.934);">position 1</div>
<div class="t" style="left:807.6px;top:535.33px;font-size:6.5px;line-height:8.45px;color:#1c1c1c;transform:scaleX(0.882);">layer 1</div>
<div class="t" style="left:840.7px;top:535.33px;font-size:6.5px;line-height:8.45px;color:#1c1c1c;transform:scaleX(1.071);">mm</div>
<div class="t" style="left:867.2px;top:535.33px;font-size:6.5px;line-height:8.45px;color:#1c1c1c;transform:scaleX(0.860);">ISO 1101</div>
<svg width="967" height="544" viewBox="0 0 967 544" style="pointer-events:none">
<g>
<path d="M663.200,536.400 a2.800,2.600 0 0 1 5.600,0 l-.6,4 a2.200,1.400 0 0 1 -4.400,0z" fill="#d86a3a" stroke="#8a3a1a" stroke-width=".4"/><ellipse cx="666" cy="536.800" rx="2.800" ry="1.300" fill="#f0d0c0" stroke="#8a3a1a" stroke-width=".4"/>
<rect x="693.400" y="536" width="5" height="5" fill="#dfe9f3" stroke="#7fa0c4" stroke-width=".5"/><path d="M694.400,539.600 l1.400,-1.800 l1.200,1 l1,-1.400" fill="none" stroke="#5b86b8" stroke-width=".5"/>
<path d="M714.600,541.400 L716.800,535.800 L718.600,541.400 M715.600,536 h4" fill="none" stroke="#555" stroke-width=".7"/><circle cx="719.600" cy="540.600" r=".9" fill="#d86a3a"/>
<rect x="767.600" y="535.800" width="3.800" height="5.600" fill="#eef3f8" stroke="#8aa0b8" stroke-width=".6"/><path d="M768.400,537.400 h2.200 M768.400,539 h2.200" stroke="#8aa0b8" stroke-width=".4"/>
<circle cx="786.700" cy="538.800" r="2.900" fill="#2cc0d8"/><path d="M785.800,537.200 l2.600,1.600 l-2.600,1.600z" fill="#fff"/>
<g fill="#2c5c8c"><circle cx="907" cy="536.600" r=".9"/><circle cx="907" cy="541" r=".9"/><circle cx="911.600" cy="538.800" r=".9"/></g><path d="M907,536.600 L911.600,538.800 L907,541 M909,538.800 h-3.400" fill="none" stroke="#2c5c8c" stroke-width=".5"/>
<circle cx="933.400" cy="538.600" r="2.600" fill="none" stroke="#333" stroke-width="1"/><rect x="934" y="539.400" width="3" height="2.600" fill="#f0b030" stroke="#7a5a10" stroke-width=".3"/>
<path d="M957.600,541 c.8,-.8 .8,-2.400 .8,-3.400 a1.800,1.900 0 0 1 3.600,0 c0,1 0,2.600 .8,3.400z" fill="#333"/><circle cx="960.200" cy="541.700" r=".7" fill="#333"/>
<g fill="#333"><path d="M678,537.800 h3 l-1.500,1.800z"/><path d="M755.500,537.800 h3 l-1.500,1.800z"/><path d="M797.500,537.800 h3 l-1.500,1.800z"/><path d="M831,537.800 h3 l-1.500,1.800z"/><path d="M857.500,537.800 h3 l-1.500,1.800z"/><path d="M896.200,537.800 h3 l-1.500,1.800z"/><path d="M920.300,537.800 h3 l-1.500,1.800z"/><path d="M945.200,537.800 h3 l-1.500,1.800z"/></g>
<g stroke="#b8b8b8" stroke-width=".5"><path d="M675.600,536 v5.200 M753,536 v5.200 M795,536 v5.200 M828.600,536 v5.200 M855.200,536 v5.200 M893.800,536 v5.200 M918,536 v5.200 M942.800,536 v5.200"/></g>
</g>
</svg>
</body></html>
